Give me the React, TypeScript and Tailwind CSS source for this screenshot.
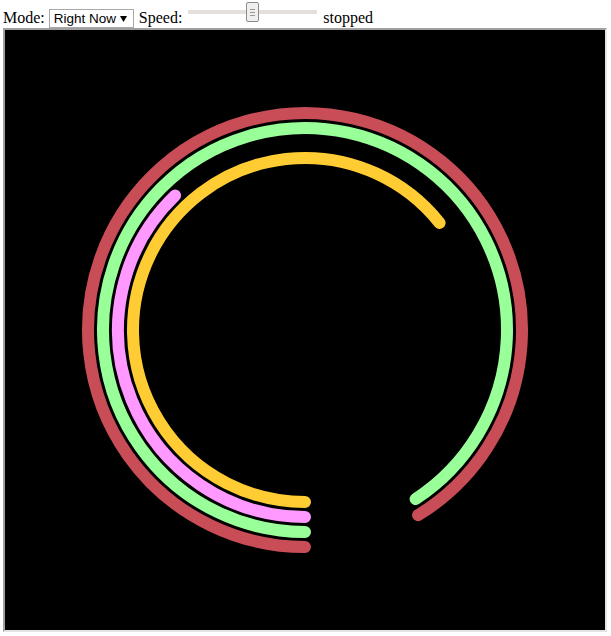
const CX = 300;
const CY = 300;

const rings = [
  { r: 217, end: 418.6, color: "#c94d57" },
  { r: 202, end: 416.8, color: "#99ff99" },
  { r: 187, end: 226, color: "#ff99ff" },
  { r: 172, end: 321.5, color: "#ffcc33" },
];

function arcPath(r: number, endDeg: number) {
  const start = (90 * Math.PI) / 180;
  const end = (endDeg * Math.PI) / 180;
  const x1 = CX + r * Math.cos(start);
  const y1 = CY + r * Math.sin(start);
  const x2 = CX + r * Math.cos(end);
  const y2 = CY + r * Math.sin(end);
  const large = endDeg - 90 > 180 ? 1 : 0;
  return `M ${x1} ${y1} A ${r} ${r} 0 ${large} 1 ${x2} ${y2}`;
}

function Slider() {
  return (
    <div className="relative ml-[6px] mt-[2px] h-[20px] w-[129px]">
      <div className="mt-[8px] h-[4px] w-full bg-[#e3e0db]" />
      <div className="absolute left-[58px] top-0 flex h-[20px] w-[13px] flex-col items-center justify-center gap-[2px] rounded-[2px] border border-[#8c8a86] bg-[#f0efed]">
        <div className="h-px w-[5px] bg-[#9a9792]" />
        <div className="h-px w-[5px] bg-[#9a9792]" />
        <div className="h-px w-[5px] bg-[#9a9792]" />
      </div>
    </div>
  );
}

export default function App() {
  return (
    <div className="bg-white font-['Liberation_Serif',serif] text-[16px] text-black">
      <div className="flex h-[28px] items-start pl-[3px]">
        <span className="mt-[9px] leading-[18px]">Mode:</span>
        <div className="relative ml-[4px] mt-[9px] flex h-[19px] w-[85px] items-center border border-[#a9a9a9] bg-white pl-[4px] font-['Liberation_Sans',sans-serif] text-[13.5px] leading-[17px]">
          Right Now
          <svg
            width="7"
            height="6"
            viewBox="0 0 7 6"
            className="absolute right-[6px] top-[6px]"
          >
            <path d="M0 0 H7 L3.5 6 Z" fill="#000" />
          </svg>
        </div>
        <span className="ml-[5px] mt-[9px] leading-[18px]">Speed:</span>
        <Slider />
        <span className="ml-[6px] mt-[9px] leading-[18px]">stopped</span>
      </div>
      <div className="ml-[3px] w-[604px] border-2 border-b-[#e3e3e3] border-l-[#a0a0a0] border-r-[#e3e3e3] border-t-[#a0a0a0] bg-black">
        <svg width="600" height="600" viewBox="0 0 600 600" className="block">
          {rings.map((ring) => (
            <path
              key={"o" + ring.r}
              d={arcPath(ring.r, ring.end)}
              fill="none"
              stroke="#000"
              strokeWidth={15}
              strokeLinecap="round"
            />
          ))}
          {rings.map((ring) => (
            <path
              key={ring.r}
              d={arcPath(ring.r, ring.end)}
              fill="none"
              stroke={ring.color}
              strokeWidth={12}
              strokeLinecap="round"
            />
          ))}
        </svg>
      </div>
    </div>
  );
}
